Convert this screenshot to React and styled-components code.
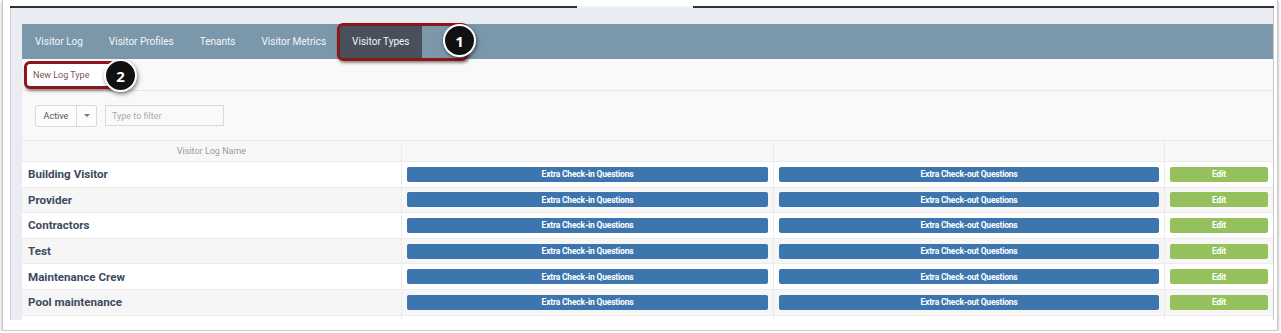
import React from "react";
import styled, { createGlobalStyle } from "styled-components";

const GlobalStyle = createGlobalStyle`
   body {
      margin: 0;
      background: #fff;
      font-family: Roboto, "Liberation Sans", sans-serif;
   }
   * { box-sizing: border-box; }
`;

const Frame = styled.div`
   width: 1276px;
   height: 331px;
   margin-left: 2px;
   padding: 6px 3px 0 7px;
   border: 1px solid #c9c9c9;
   border-top: none;
   box-shadow: 0 2px 3px rgba(0, 0, 0, 0.35);
`;

const Screen = styled.div`
   height: 314px;
   display: flex;
   flex-direction: column;
   overflow: hidden;
`;

const TopBar = styled.div`
   height: 2px;
   flex: none;
   display: flex;
`;

const BarPart = styled.div`
   width: ${({ w }) => (w ? `${w}px` : "auto")};
   flex: ${({ w }) => (w ? "none" : 1)};
   background: ${({ light }) => (light ? "#f1f2f4" : "#2b2e3b")};
`;

const Body = styled.div`
   flex: 1;
   display: flex;
   background: #e9ecf1;
   border-left: 1px solid #cdd1d6;
   border-right: 1px solid #c8c8c8;
   padding: 16px 0 0 11px;
   min-height: 0;
`;

const Panel = styled.div`
   flex: 1;
   position: relative;
   background: #f9f9f9;
   display: flex;
   flex-direction: column;
   & > * {
      flex-shrink: 0;
   }
`;

const Nav = styled.div`
   height: 35px;
   display: flex;
   background: #7a98aa;
`;

const Tab = styled.div`
   display: flex;
   align-items: center;
   padding: 0 13px;
   font-size: 10px;
   font-weight: 400;
   color: #f3f6f8;
   background: ${({ active }) => (active ? "#4a505b" : "transparent")};
`;

const SubBar = styled.div`
   height: 32px;
   display: flex;
   align-items: center;
   padding-left: 11px;
   border-bottom: 1px solid #e6e6e6;
`;

const NewButton = styled.div`
   font-size: 9px;
   color: #7a5555;
   position: relative;
   z-index: 2;
`;

const FilterRow = styled.div`
   height: 49px;
   display: flex;
   align-items: center;
   gap: 8px;
   padding-left: 13px;
`;

const Select = styled.div`
   display: flex;
   height: 22px;
   border: 1px solid #dcdcdc;
   border-radius: 2px;
   background: #fcfcfc;
   font-size: 9px;
   color: #555;
`;

const SelectLabel = styled.div`
   width: 41px;
   display: flex;
   align-items: center;
   justify-content: center;
   border-right: 1px solid #dcdcdc;
`;

const Caret = styled.div`
   width: 19px;
   display: flex;
   align-items: center;
   justify-content: center;
   &::after {
      content: "";
      border-left: 3px solid transparent;
      border-right: 3px solid transparent;
      border-top: 3px solid #777;
   }
`;

const FilterInput = styled.div`
   width: 119px;
   height: 21px;
   border: 1px solid #dadada;
   background: #f9f9f9;
   display: flex;
   align-items: center;
   padding-left: 6px;
   font-size: 9px;
   color: #aaa;
`;

const Row = styled.div`
   display: grid;
   grid-template-columns: 379px 372px 391px 1fr;
   height: ${({ head }) => (head ? "21px" : "25.6px")};
   background: ${({ head, alt }) =>
      head ? "#f7f7f7" : alt ? "#f6f6f6" : "#fff"};
   border-top: 1px solid #ececec;
`;

const Cell = styled.div`
   display: flex;
   align-items: center;
   justify-content: ${({ center }) => (center ? "center" : "flex-start")};
   padding: 0 5px;
   border-left: ${({ first }) => (first ? "none" : "1px solid #ebebeb")};
`;

const HeadText = styled.span`
   font-size: 9px;
   color: #9a9a9a;
`;

const Name = styled.span`
   font-size: 11.6px;
   font-weight: 700;
   color: #3c4a5e;
   padding-left: 1px;
`;

const ActionButton = styled.div`
   flex: 1;
   height: 15px;
   display: flex;
   align-items: center;
   justify-content: center;
   border-radius: 2px;
   background: ${({ green }) => (green ? "#95c15d" : "#3d76ae")};
   color: #fff;
   font-size: 8.5px;
   font-weight: 700;
   letter-spacing: -0.2px;
`;

const Outline = styled.div`
   position: absolute;
   left: ${({ x }) => x}px;
   top: ${({ y }) => y}px;
   width: ${({ w }) => w}px;
   height: ${({ h }) => h}px;
   border: 3px solid #8e1518;
   border-radius: 6px;
   background: ${({ fill }) => fill || "transparent"};
   box-shadow: 1px 2px 3px rgba(0, 0, 0, 0.45);
   z-index: 1;
`;

const Badge = styled.div`
   position: absolute;
   left: ${({ x }) => x}px;
   top: ${({ y }) => y}px;
   width: 33px;
   height: 33px;
   border-radius: 50%;
   background: #111;
   border: 2.5px solid #fff;
   box-shadow: 1px 2px 4px rgba(0, 0, 0, 0.5);
   color: #fff;
   font-family: "Open Sans", Roboto, sans-serif;
   font-weight: 700;
   font-size: 15px;
   display: flex;
   align-items: center;
   justify-content: center;
   z-index: 3;
`;

const tabs = ["Visitor Log", "Visitor Profiles", "Tenants", "Visitor Metrics", "Visitor Types"];
const types = [
   "Building Visitor",
   "Provider",
   "Contractors",
   "Test",
   "Maintenance Crew",
   "Pool maintenance",
   "",
];

const App = () => {
   return (
      <>
         <GlobalStyle />
         <Frame>
            <Screen>
               <TopBar>
                  <BarPart w={567} />
                  <BarPart w={116} light />
                  <BarPart />
               </TopBar>
               <Body>
                  <Panel>
                     <Nav>
                        {tabs.map((t) => (
                           <Tab key={t} active={t === "Visitor Types"}>
                              {t}
                           </Tab>
                        ))}
                     </Nav>
                     <SubBar>
                        <NewButton>New Log Type</NewButton>
                     </SubBar>
                     <FilterRow>
                        <Select>
                           <SelectLabel>Active</SelectLabel>
                           <Caret />
                        </Select>
                        <FilterInput>Type to filter</FilterInput>
                     </FilterRow>
                     <Row head>
                        <Cell first center>
                           <HeadText>Visitor Log Name</HeadText>
                        </Cell>
                        <Cell />
                        <Cell />
                        <Cell />
                     </Row>
                     {types.map((name, i) => (
                        <Row key={i} alt={i % 2 === 1}>
                           <Cell first>
                              <Name>{name}</Name>
                           </Cell>
                           <Cell>
                              {name && <ActionButton>Extra Check-in Questions</ActionButton>}
                           </Cell>
                           <Cell>
                              {name && <ActionButton>Extra Check-out Questions</ActionButton>}
                           </Cell>
                           <Cell>{name && <ActionButton green>Edit</ActionButton>}</Cell>
                        </Row>
                     ))}

                     <Outline x={315} y={-1} w={131} h={38} />
                     <Badge x={421} y={0}>1</Badge>
                     <Outline x={2} y={37} w={104} h={28} fill="#fff" />
                     <Badge x={82} y={35}>2</Badge>
                  </Panel>
               </Body>
            </Screen>
         </Frame>
      </>
   );
};

export default App;
